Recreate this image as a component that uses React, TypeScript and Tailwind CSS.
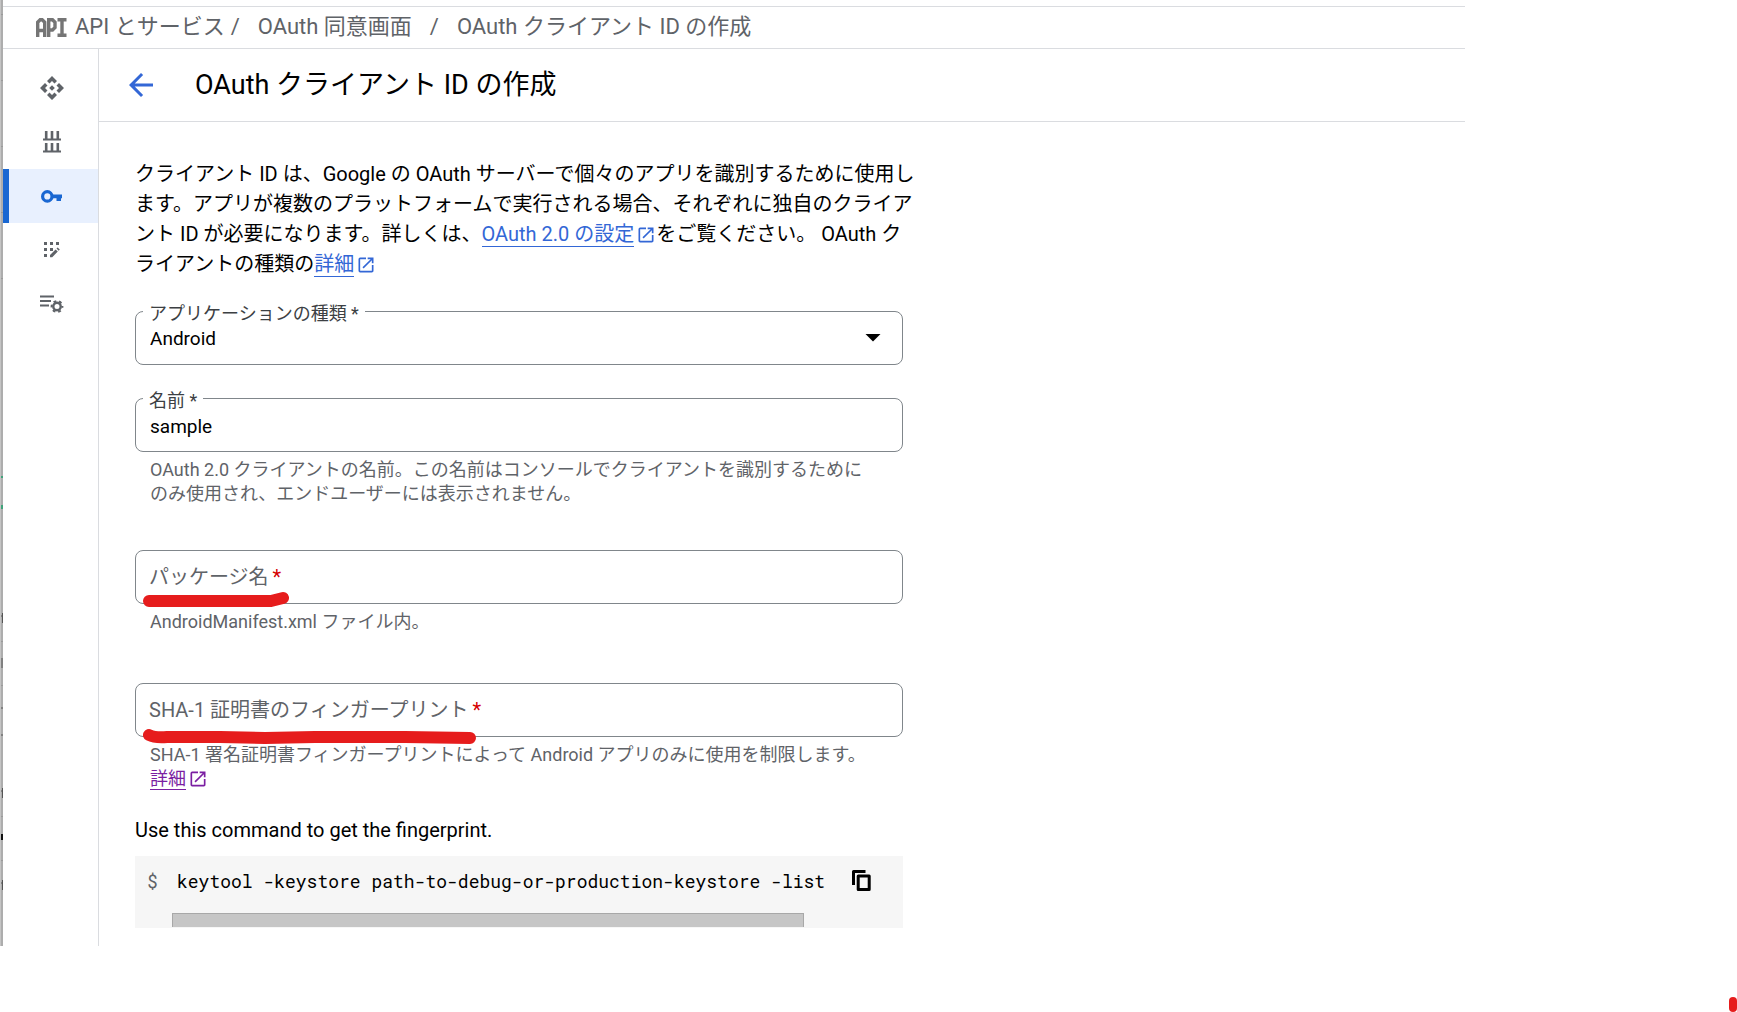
import type { ReactNode } from "react"
import { MdArrowBack, MdArrowDropDown, MdOpenInNew } from "react-icons/md"

function ApiLogo() {
  return (
    <svg viewBox="0 0 31 19" className="mt-0.5 h-[19px] w-[31px] shrink-0" fill="none" stroke="#757575" strokeWidth="3.4">
      <path d="M1.7 19V4.2L4.2 1.7H6.2L8.7 4.2V19M1.700 12.5H8.7" />
      <path d="M12.7 19V1.7H16.5L19 4.2V9.5L16.5 12H12.7" />
      <path d="M21.5 1.7H30.5M26 1.7V17.3M21.5 17.3H30.5" />
    </svg>
  )
}

function ApiIcon() {
  return (
    <svg viewBox="0 0 24 24" className="h-6 w-6" fill="currentColor">
      <path d="M12 0l5 5-2.500 2.5L12 5 9.500 7.5 7 5z" />
      <path d="M12 24l5-5-2.500-2.500L12 19l-2.500-2.500L7 19z" />
      <path d="M0 12l5-5 2.500 2.500L5 12l2.500 2.500L5 17z" />
      <path d="M24 12l-5-5-2.500 2.500L19 12l-2.500 2.500L19 17z" />
      <path d="M12 9.200l2.800 2.800-2.800 2.800L9.200 12z" />
    </svg>
  )
}

function LibraryIcon() {
  return (
    <svg viewBox="0 0 18 22" className="h-[22px] w-[18px]" fill="none" stroke="currentColor">
      <path strokeWidth="2.6" d="M3.2 0V8M9 0V8M14.8 0V8M3.2 12V20M9 12V20M14.8 12V20" />
      <path strokeWidth="2" d="M0 8.5H18M0 20.5H18" />
    </svg>
  )
}

function KeyIcon() {
  return (
    <svg viewBox="0 0 21 13" className="h-[13px] w-[21px]" fill="currentColor">
      <circle cx="6.3" cy="6.4" r="4.700" fill="none" stroke="currentColor" strokeWidth="3.200" />
      <path d="M10.500 4.600H21V8.200H20V11H15.500V8.200H10.500z" />
    </svg>
  )
}

function ConsentIcon() {
  return (
    <svg viewBox="0 0 16 16" className="h-4 w-4" fill="currentColor">
      <path d="M0 0h3v3H0zM6 0h3v3H6zM12 0h3v3h-3zM0 6h3v3H0zM6 6h3v3H6zM0 12h3v3H0z" />
      <path d="M6 13v2.200h2.200l5.600-5.600-2.200-2.200zM12.500 6.500l2.200 2.200 1.100-1.100-2.200-2.200z" />
    </svg>
  )
}

function AgreementIcon() {
  return (
    <svg viewBox="0 0 24 18" className="h-[18px] w-6" fill="none" stroke="currentColor">
      <path strokeWidth="2.200" d="M0 1.500H14M0 6H11M0 10.500H9" />
      <circle cx="17" cy="11.500" r="3.700" strokeWidth="2.400" />
      <circle cx="17" cy="11.500" r="5.400" strokeWidth="2" strokeDasharray="2.800 2.855" strokeDashoffset="1.400" />
    </svg>
  )
}

function CopyIcon() {
  return (
    <svg viewBox="0 0 19 21" className="h-[21px] w-[19px]" fill="none" stroke="currentColor" strokeWidth="3">
      <path d="M1.500 15V1.500H13.500" strokeLinejoin="round" />
      <rect x="6.200" y="5.900" width="11" height="13.500" strokeLinejoin="round" />
    </svg>
  )
}

// Slice of the window lying behind the left edge
function EdgeStrip() {
  return (
    <div className="relative w-[3px] shrink-0 overflow-hidden border-l border-[#c4c4c4] bg-[#adadad]">
      <svg viewBox="0 0 3 946" className="absolute top-0 -left-px h-[946px] w-[3px]">
        <path stroke="#9a9a9a" d="M0 14.5H3M0 80.5H3M0 146.5H3M0 212.5H3M0 278.5H3M0 641.5H3M0 685.5H3M0 816.5H3M0 860.5H3" />
        <path stroke="#3fa37a" strokeWidth="2" d="M0 477H3" />
        <path stroke="#3fa37a" strokeWidth="4" d="M0 507H3" />
        <path stroke="#555" d="M0 616H3M2.5 613V623M2 658V668M0 708H3M0 735H3M0.5 735V743M0 791H3M2.5 788V798M0 883H3M2.5 880V890" />
        <path stroke="#111" strokeWidth="6" d="M0 837H3" />
      </svg>
    </div>
  )
}

const navItems: { label: string; icon: ReactNode; active?: boolean }[] = [
  { label: "有効な API とサービス", icon: <ApiIcon /> },
  { label: "ライブラリ", icon: <LibraryIcon /> },
  { label: "認証情報", icon: <KeyIcon />, active: true },
  { label: "OAuth 同意画面", icon: <ConsentIcon /> },
  { label: "ページの使用に関する契約", icon: <AgreementIcon /> },
]

function Sidebar() {
  return (
    <nav className="w-24 shrink-0 border-r border-[#dadce0] pt-3">
      {navItems.map((item) => (
        <a
          key={item.label}
          href="#"
          aria-label={item.label}
          className={`flex h-[54px] items-center justify-center border-l-6 pr-1 ${
            item.active ? "border-[#1967d2] bg-[#e8f0fe] text-[#1967d2]" : "border-transparent text-[#5f6368]"
          }`}
        >
          {item.icon}
        </a>
      ))}
    </nav>
  )
}

function ExternalLink({ children, visited }: { children: ReactNode; visited?: boolean }) {
  return (
    <a href="#" className={visited ? "text-[#7b1fa2]" : "text-[#3367d6]"}>
      <span className="border-b border-current">{children}</span>
      <MdOpenInNew className="ml-0.5 inline h-5 w-5 align-[-4px]" />
    </a>
  )
}

function Marker({ d, className }: { d: string; className: string }) {
  return (
    <svg
      viewBox="0 0 360 20"
      className={`pointer-events-none absolute left-0 h-5 w-[360px] ${className}`}
      fill="none"
      stroke="#e61c1c"
      strokeWidth="12"
      strokeLinecap="round"
      strokeLinejoin="round"
    >
      <path d={d} />
    </svg>
  )
}

const box = "block h-[54px] w-full rounded-lg border border-[#80868b] bg-transparent px-3.5 pt-0.5 text-[19px] text-black outline-none"
const floating = "absolute -top-[9px] left-2 bg-white px-1.5 text-lg leading-6 text-[#3c4043]"
const resting = "absolute top-0 left-3.5 text-xl leading-[54px] text-[#5f6368]"
const hint = "px-[15px] pt-1.5 text-lg leading-6 whitespace-nowrap text-[#5f6368]"

export default function App() {
  return (
    <div className="relative min-h-screen bg-white font-[Roboto,'Noto_Sans_CJK_JP',sans-serif] text-black">
      <div className="flex max-w-[1465px]">
        <EdgeStrip />
        <div className="min-w-0 flex-1 pt-1.5">
          <div className="flex h-[43px] items-center border-y border-[#dadce0] pb-0.5 pl-[33px] text-[22px] text-[#5f6368]">
            <ApiLogo />
            <ol className="flex items-center pl-2 whitespace-nowrap">
              <li>API とサービス</li>
              <li className="pr-[18px] pl-1.5">/</li>
              <li>OAuth 同意画面</li>
              <li className="px-[18px]">/</li>
              <li>OAuth クライアント ID の作成</li>
            </ol>
          </div>
          <div className="flex">
            <Sidebar />
            <main className="min-w-0 flex-1">
              <header className="flex h-[73px] items-center gap-9 border-b border-[#dadce0] pl-6">
                <button type="button" aria-label="戻る" className="text-[#3367d6]">
                  <MdArrowBack className="h-9 w-9" />
                </button>
                <h1 className="text-[27px]">OAuth クライアント ID の作成</h1>
              </header>
              <form className="max-w-[804px] pb-[18px] pl-9">
                <p className="pt-[37px] text-xl leading-[30px] whitespace-nowrap">
                  クライアント ID は、Google の OAuth サーバーで個々のアプリを識別するために使用し
                  <br />
                  ます。アプリが複数のプラットフォームで実行される場合、それぞれに独自のクライア
                  <br />
                  ント ID が必要になります。詳しくは、<ExternalLink>OAuth 2.0 の設定</ExternalLink>をご覧ください。 OAuth ク
                  <br />
                  ライアントの種類の<ExternalLink>詳細</ExternalLink>
                </p>

                <div className="relative mt-8">
                  <label htmlFor="type" className={floating}>アプリケーションの種類 *</label>
                  <select id="type" className={`${box} appearance-none`}>
                    <option>Android</option>
                  </select>
                  <MdArrowDropDown className="pointer-events-none absolute top-2 right-3 h-9 w-9" />
                </div>

                <div className="mt-[33px]">
                  <div className="relative">
                    <label htmlFor="name" className={floating}>名前 *</label>
                    <input id="name" defaultValue="sample" className={box} />
                  </div>
                  <p className={hint}>
                    OAuth 2.0 クライアントの名前。この名前はコンソールでクライアントを識別するために
                    <br />
                    のみ使用され、エンドユーザーには表示されません。
                  </p>
                </div>

                <div className="mt-11">
                  <div className="relative">
                    <label htmlFor="package" className={resting}>
                      パッケージ名<span className="pl-1 text-[#d50000]">*</span>
                    </label>
                    <input id="package" className={box} />
                    <Marker d="M14 12H136L148 9" className="top-[39px]" />
                  </div>
                  <p className={hint}>AndroidManifest.xml ファイル内。</p>
                </div>

                <div className="mt-[49px]">
                  <div className="relative">
                    <label htmlFor="sha" className={resting}>
                      SHA-1 証明書のフィンガープリント<span className="pl-1 text-[#d50000]">*</span>
                    </label>
                    <input id="sha" className={box} />
                    <Marker d="M14 7Q20 10 32 9L85 9L130 10L180 9L270 9L335 10" className="top-[45px]" />
                  </div>
                  <p className={hint}>
                    SHA-1 署名証明書フィンガープリントによって Android アプリのみに使用を制限します。
                    <br />
                    <ExternalLink visited>詳細</ExternalLink>
                  </p>
                </div>

                <p className="mt-6 text-xl leading-[30px]">Use this command to get the fingerprint.</p>
                <div className="mt-[11px] bg-[#f6f6f6] pb-px">
                  <div className="flex h-[57px] items-center pb-2 pl-3 font-['Roboto_Mono','DejaVu_Sans_Mono',monospace] text-lg">
                    <span className="w-[30px] text-[#5f6368]">$</span>
                    <code className="flex-1 overflow-hidden font-[inherit] whitespace-nowrap">
                      keytool -keystore path-to-debug-or-production-keystore -list
                    </code>
                    <button type="button" aria-label="コピー" className="pr-8">
                      <CopyIcon />
                    </button>
                  </div>
                  <div className="mr-[99px] ml-[37px] h-3.5 border border-b-0 border-[#a8a8a8] bg-[#c6c6c6]" />
                </div>
              </form>
            </main>
          </div>
        </div>
      </div>
      <span className="absolute right-0 bottom-0 h-[15px] w-2 rounded-full bg-[#e61c1c]" />
    </div>
  )
}
